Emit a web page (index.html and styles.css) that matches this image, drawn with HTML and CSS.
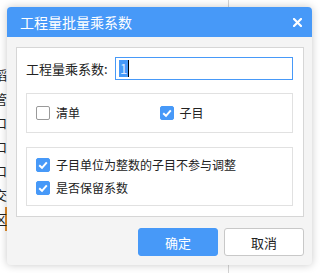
FILE: index.html
```html
<!DOCTYPE html>
<html>
<head>
  <title>工程量批量乘系数</title>
  <link rel="stylesheet" href="styles.css">
</head>
<body>
  <div class="page">
    <div class="side">
      <div>稻</div>
      <div>管</div>
      <div>口</div>
      <div>口</div>
      <div>口</div>
      <div>交</div>
      <div class="active">区</div>
    </div>
    <div class="main"></div>
  </div>

  <div class="dialog">
    <div class="dialog-head">
      <span class="dialog-title">工程量批量乘系数</span>
      <svg class="close" width="9" height="9" viewBox="0 0 9 9">
        <path d="M1 1 L8 8 M8 1 L1 8" stroke="#fff" stroke-width="2.2" stroke-linecap="square"/>
      </svg>
    </div>

    <div class="panel">
      <div class="field">
        <label class="field-label">工程量乘系数:</label>
        <div class="input"><span class="sel">1</span><span class="caret"></span></div>
      </div>

      <div class="group row">
        <div class="check">
          <span class="box"></span>清单
        </div>
        <div class="check">
          <span class="box on"><svg width="14" height="14" viewBox="0 0 14 14"><path d="M3.2 7.2 L6 9.8 L10.8 4.4" fill="none" stroke="#fff" stroke-width="2"/></svg></span>子目
        </div>
      </div>

      <div class="group col">
        <div class="check">
          <span class="box on"><svg width="14" height="14" viewBox="0 0 14 14"><path d="M3.2 7.2 L6 9.8 L10.8 4.4" fill="none" stroke="#fff" stroke-width="2"/></svg></span>子目单位为整数的子目不参与调整
        </div>
        <div class="check">
          <span class="box on"><svg width="14" height="14" viewBox="0 0 14 14"><path d="M3.2 7.2 L6 9.8 L10.8 4.4" fill="none" stroke="#fff" stroke-width="2"/></svg></span>是否保留系数
        </div>
      </div>
    </div>

    <div class="actions">
      <button class="btn primary">确定</button>
      <button class="btn">取消</button>
    </div>
  </div>
</body>
</html>
```

FILE: styles.css
```css
body {
  margin: 0;
  background: #fff;
  font-family: "Noto Sans CJK SC", "Noto Sans", sans-serif;
  font-size: 12px;
  color: #222;
}

.page {
  display: flex;
  height: 273px;
  overflow: hidden;
}

.side {
  width: 7px;
  overflow: hidden;
  padding-top: 63px;
  line-height: 24px;
  font-size: 13px;
}

.side div {
  margin-left: -6px;
  white-space: nowrap;
}

.side .active {
  border-right: 2px solid #e08a2a;
}

.main {
  width: 221px;
  border-right: 1px solid #d4d4d4;
}

.dialog {
  position: absolute;
  left: 7px;
  top: 7px;
  width: 305px;
  height: 258px;
  background: #f4f4f4;
  border-radius: 4px;
  box-shadow: 0 0 8px rgba(0, 0, 0, 0.22);
  overflow: hidden;
}

.dialog-head {
  height: 30px;
  background: #4799f8;
  display: flex;
  align-items: center;
  justify-content: space-between;
  padding: 0 10px 0 13px;
}

.dialog-title {
  color: #fff;
  font-size: 14px;
}

.panel {
  margin: 10px 8px 0 9px;
  background: #fff;
  border: 1px solid #d6d6d6;
  padding: 9px 10px 10px 9px;
}

.field {
  display: flex;
  align-items: center;
  justify-content: space-between;
}

.field-label {
  font-size: 13px;
}

.input {
  width: 173px;
  height: 21px;
  border: 1px solid #4799f8;
  display: flex;
  align-items: center;
  padding-left: 3px;
}

.sel {
  background: #4799f8;
  color: #dfe9ff;
  font-size: 13px;
  line-height: 17px;
  padding: 0 1px;
}

.caret {
  width: 1px;
  height: 17px;
  background: #000;
}

.group {
  border: 1px solid #e1e1e1;
  margin-top: 13px;
  padding: 0 9px;
}

.group.row {
  display: flex;
  height: 38px;
  align-items: center;
}

.group.row .check {
  width: 127px;
}

.group.col {
  margin-top: 14px;
  padding-top: 10px;
  padding-bottom: 10px;
  display: flex;
  flex-direction: column;
  gap: 9px;
}

.check {
  display: flex;
  align-items: center;
  font-size: 12px;
  line-height: 14px;
}

.box {
  width: 12px;
  height: 12px;
  border: 1px solid #9a9a9a;
  border-radius: 2px;
  margin-right: 6px;
  background: #fff;
  position: relative;
}

.box.on {
  background: #4799f8;
  border-color: #4799f8;
}

.box svg {
  position: absolute;
  left: -1px;
  top: -1px;
}

.actions {
  display: flex;
  justify-content: flex-end;
  gap: 6px;
  margin: 11px 8px 0 0;
}

.btn {
  width: 80px;
  height: 28px;
  border: 1px solid #c8c8c8;
  border-radius: 3px;
  background: #fff;
  font-family: "Noto Sans CJK SC", sans-serif;
  font-size: 13px;
  color: #222;
}

.btn.primary {
  background: #4799f8;
  border-color: #4799f8;
  color: #fff;
}
```
